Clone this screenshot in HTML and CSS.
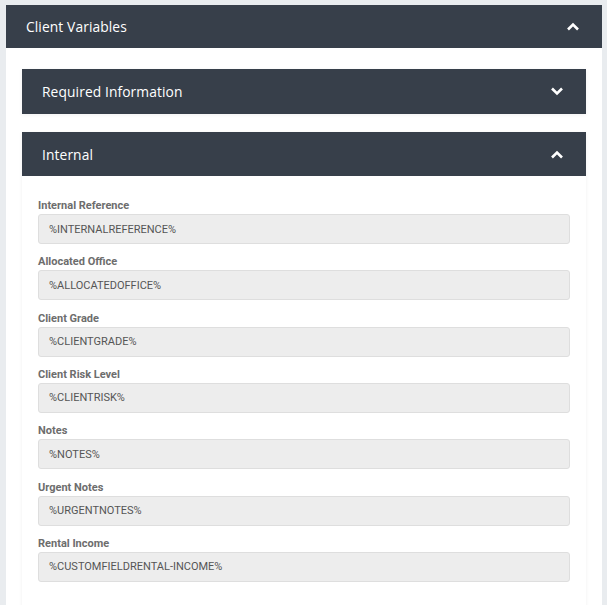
FILE: index.html
```html
<!DOCTYPE html>
<html lang="en">
<head>
<meta charset="utf-8">
<title>Client Variables</title>
<link rel="stylesheet" href="styles.css">
</head>
<body>
<section class="card">
  <header class="card-head">
    <h2 class="card-title">Client Variables</h2>
    <svg class="chev" width="14" height="9" viewBox="0 0 14 9"><path d="M2 7.5 L7 2.5 L12 7.5" fill="none" stroke="#fff" stroke-width="2.6"/></svg>
  </header>
  <div class="card-body">
    <section class="panel">
      <header class="panel-head panel-head-tall">
        <h3 class="panel-title">Required Information</h3>
        <svg class="chev" width="14" height="9" viewBox="0 0 14 9"><path d="M2 1.5 L7 6.5 L12 1.5" fill="none" stroke="#fff" stroke-width="2.6"/></svg>
      </header>
    </section>
    <section class="panel">
      <header class="panel-head">
        <h3 class="panel-title">Internal</h3>
        <svg class="chev" width="14" height="9" viewBox="0 0 14 9"><path d="M2 7.5 L7 2.5 L12 7.5" fill="none" stroke="#fff" stroke-width="2.6"/></svg>
      </header>
      <div class="panel-body">
        <div class="field"><label class="field-label">Internal Reference</label><div class="field-input">%INTERNALREFERENCE%</div></div>
        <div class="field"><label class="field-label">Allocated Office</label><div class="field-input">%ALLOCATEDOFFICE%</div></div>
        <div class="field"><label class="field-label">Client Grade</label><div class="field-input">%CLIENTGRADE%</div></div>
        <div class="field"><label class="field-label">Client Risk Level</label><div class="field-input">%CLIENTRISK%</div></div>
        <div class="field"><label class="field-label">Notes</label><div class="field-input">%NOTES%</div></div>
        <div class="field"><label class="field-label">Urgent Notes</label><div class="field-input">%URGENTNOTES%</div></div>
        <div class="field"><label class="field-label">Rental Income</label><div class="field-input">%CUSTOMFIELDRENTAL-INCOME%</div></div>
      </div>
    </section>
  </div>
</section>
</body>
</html>
```
FILE: styles.css
```css
* { box-sizing: border-box; }

html, body {
  margin: 0;
  padding: 0;
  background: #e9ecef;
}

body {
  padding: 5px 5px 0 6px;
  font-family: "Open Sans", "Liberation Sans", sans-serif;
}

.card {
  background: #fff;
  min-height: 620px;
}

.card-head {
  height: 43px;
  background: #373f4a;
  display: flex;
  align-items: center;
  justify-content: space-between;
  padding: 0 22px 0 20px;
}

.card-title,
.panel-title {
  margin: 0;
  color: #fff;
  font-size: 13.8px;
  font-weight: 400;
  letter-spacing: 0.1px;
}

.chev { display: block; }

.card-body {
  padding: 21px 16px 0 16px;
  display: flex;
  flex-direction: column;
  gap: 18px;
}

.panel {
  background: #fff;
  box-shadow: 0 1px 4px rgba(0, 0, 0, 0.06);
}

.panel-head {
  height: 44px;
  background: #373f4a;
  display: flex;
  align-items: center;
  justify-content: space-between;
  padding: 0 22px 0 20px;
}

.panel-head-tall { height: 45px; }

.panel-body {
  padding: 23px 16px 30px 16px;
  font-family: Roboto, "Liberation Sans", sans-serif;
}

.field { margin-bottom: 11.33px; }

.field-label {
  display: block;
  font-size: 11px;
  line-height: 14px;
  font-weight: 700;
  color: #6d6d6d;
  margin-bottom: 1px;
}

.field-input {
  height: 30px;
  background: #ededed;
  border: 1px solid #dedede;
  border-radius: 3px;
  padding: 0 10px;
  display: flex;
  align-items: center;
  font-size: 11px;
  color: #555;
}
```
